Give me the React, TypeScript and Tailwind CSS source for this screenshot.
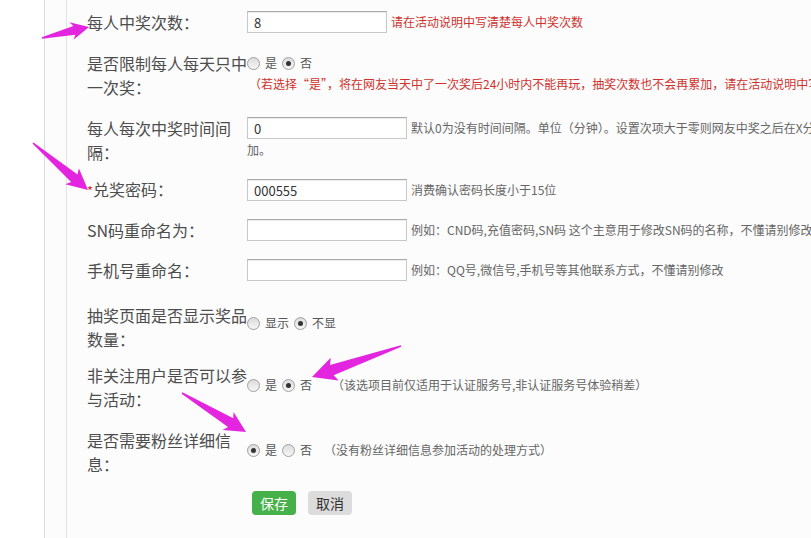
import type { ReactNode } from 'react';

const font = { fontFamily: '"Noto Sans CJK SC", "Noto Sans", sans-serif' };

type ArrowProps = { x0: number; y0: number; x1: number; y1: number; head: number; half: number; shaft: number };

// tapered pointer arrow: thin tail, shaft widening into a triangular head
function Arrow({ x0, y0, x1, y1, head, half, shaft }: ArrowProps) {
  const len = Math.hypot(x1 - x0, y1 - y0);
  const deg = (Math.atan2(y1 - y0, x1 - x0) * 180) / Math.PI;
  const b = len - head;
  const pts = [
    [0, -0.8],
    [b + 3, -shaft],
    [b, -half],
    [len, 0],
    [b, half],
    [b + 3, shaft],
    [0, 0.8],
  ]
    .map((p) => p.join(','))
    .join(' ');
  return <polygon points={pts} fill="#e425e0" transform={`translate(${x0} ${y0}) rotate(${deg})`} />;
}

function Radio({ checked }: { checked?: boolean }) {
  return (
    <span className="w-[13px] h-[13px] rounded-full border border-[#a0a0a0] bg-gradient-to-b from-[#dcdcdc] to-[#f6f6f6] flex items-center justify-center shrink-0">
      {checked && <span className="w-[5px] h-[5px] rounded-full bg-[#333]" />}
    </span>
  );
}

function Choice({ items, checked }: { items: string[]; checked: number }) {
  return (
    <div className="flex items-center text-[12px] text-[#555]">
      {items.map((t, i) => (
        <div key={t} className={`flex items-center ${i > 0 ? 'ml-[5px]' : ''}`}>
          <Radio checked={i === checked} />
          <span className="ml-[5px]">{t}</span>
        </div>
      ))}
    </div>
  );
}

function TextInput({ value, wide = true }: { value?: string; wide?: boolean }) {
  return (
    <input
      type="text"
      defaultValue={value}
      className={`${wide ? 'w-[160px]' : 'w-[140px]'} h-[22px] shrink-0 border border-[#c8c8c8] border-t-[#a9a9a9] bg-white px-[6px] text-[13px] text-[#333] shadow-[inset_0_1px_1px_rgba(0,0,0,0.08)] outline-none`}
    />
  );
}

function Row({ label, className = '', children }: { label: ReactNode; className?: string; children: ReactNode }) {
  return (
    <div className={`flex ${className}`}>
      <div className="w-[160px] shrink-0 text-[16px] leading-6 text-[#4d4d4d]">{label}</div>
      <div className="flex-1 min-w-0">{children}</div>
    </div>
  );
}

export default function App() {
  return (
    <div className="relative w-[811px] h-[538px] overflow-hidden bg-white flex" style={font}>
      <div className="w-[45px] shrink-0 border-r border-[#dadada] bg-white" />
      <div className="flex-1 bg-[#fcfcfc] pl-[21px]">
        <div className="h-full border-l border-[#e4e4e4] pl-[20px] pt-[10px] w-[900px]">
          <Row label="每人中奖次数：" className="h-6 items-center">
            <div className="flex items-center h-6">
              <TextInput value="8" wide={false} />
              <span className="ml-1 text-[12px] text-[#d0312d] whitespace-nowrap">请在活动说明中写清楚每人中奖次数</span>
            </div>
          </Row>

          <Row label={<>是否限制每人每天只中<br />一次奖：</>} className="mt-[17px]">
            <div className="h-6 flex items-center">
              <Choice items={['是', '否']} checked={1} />
            </div>
            <div className="ml-[2px] mt-[1px] leading-4 text-[12px] text-[#d0312d] whitespace-nowrap">
              （若选择“是”，将在网友当天中了一次奖后24小时内不能再玩，抽奖次数也不会再累加，请在活动说明中写清楚）
            </div>
          </Row>

          <Row label={<>每人每次中奖时间间<br />隔：</>} className="mt-[17px]">
            <div className="h-6 flex items-center">
              <TextInput value="0" />
              <span className="ml-1 text-[12px] text-[#666] whitespace-nowrap">
                默认0为没有时间间隔。单位（分钟）。设置次项大于零则网友中奖之后在X分钟内不能再参
              </span>
            </div>
            <div className="leading-5 text-[12px] text-[#666]">加。</div>
          </Row>

          <Row
            label={
              <>
                <span className="text-[#d0312d] text-[13px]">*</span>兑奖密码：
              </>
            }
            className="mt-[14px] h-6 items-center"
          >
            <div className="flex items-center h-6">
              <TextInput value="000555" />
              <span className="ml-1 text-[12px] text-[#666] whitespace-nowrap">消费确认密码长度小于15位</span>
            </div>
          </Row>

          <Row label="SN码重命名为：" className="mt-4 h-6 items-center">
            <div className="flex items-center h-6">
              <TextInput />
              <span className="ml-1 text-[12px] text-[#666] whitespace-nowrap">
                例如：CND码,充值密码,SN码 这个主意用于修改SN码的名称，不懂请别修改
              </span>
            </div>
          </Row>

          <Row label="手机号重命名：" className="mt-4 h-6 items-center">
            <div className="flex items-center h-6">
              <TextInput />
              <span className="ml-1 text-[12px] text-[#666] whitespace-nowrap">
                例如：QQ号,微信号,手机号等其他联系方式，不懂请别修改
              </span>
            </div>
          </Row>

          <Row label={<>抽奖页面是否显示奖品<br />数量：</>} className="mt-[21px]">
            <div className="h-12 flex items-center pb-[8px]">
              <Choice items={['显示', '不显']} checked={1} />
            </div>
          </Row>

          <Row label={<>非关注用户是否可以参<br />与活动：</>} className="mt-3">
            <div className="h-12 flex items-center pb-[4px]">
              <Choice items={['是', '否']} checked={1} />
              <span className="ml-[20px] text-[12px] text-[#666] whitespace-nowrap">
                （该选项目前仅适用于认证服务号,非认证服务号体验稍差）
              </span>
            </div>
          </Row>

          <Row label={<>是否需要粉丝详细信<br />息：</>} className="mt-[17px]">
            <div className="h-12 flex items-center pb-[4px]">
              <Choice items={['是', '否']} checked={0} />
              <span className="ml-[12px] text-[12px] text-[#666] whitespace-nowrap">（没有粉丝详细信息参加活动的处理方式）</span>
            </div>
          </Row>

          <div className="mt-[15px] ml-[165px] flex gap-3">
            <button className="w-[44px] h-6 rounded-sm bg-[#46b04a] text-white text-[14px] leading-6">保存</button>
            <button className="w-[44px] h-6 rounded-sm bg-[#dcdcdc] text-[#333] text-[14px] leading-6">取消</button>
          </div>
        </div>
      </div>

      <svg className="absolute inset-0 pointer-events-none" width="811" height="538">
        <Arrow x0={42} y0={38} x1={89} y1={27} head={18} half={9} shaft={4.5} />
        <Arrow x0={33} y0={143} x1={88} y1={190} head={21} half={10.5} shaft={5} />
        <Arrow x0={401} y0={346} x1={312} y1={377} head={24} half={12} shaft={5.5} />
        <Arrow x0={182} y0={393} x1={246} y1={432} head={21} half={10.5} shaft={5} />
      </svg>
    </div>
  );
}
